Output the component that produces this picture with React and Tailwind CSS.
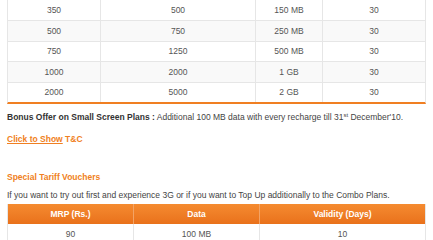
import React from 'react';

const plans = [
    ['350', '500', '150 MB', '30'],
    ['500', '750', '250 MB', '30'],
    ['750', '1250', '500 MB', '30'],
    ['1000', '2000', '1 GB', '30'],
    ['2000', '5000', '2 GB', '30'],
];

const cell = 'flex items-center justify-center border-r border-[#e6e6e6] last:border-r-0';

const App = () => {
    return (
        <div className="w-[433px] h-[240px] overflow-hidden bg-white pl-[7px] text-[8.5px] leading-[12px] text-[#555] font-['Liberation_Sans',Arial,sans-serif]">
            <div className="w-[419px] -mt-[0.5px] border-x border-[#e6e6e6] border-b-2 border-b-[#f07f22]">
                {plans.map((row, i) => (
                    <div
                        key={i}
                        className={`grid grid-cols-[93px_155px_67px_1fr] h-[20.5px] ${i > 0 ? 'border-t border-[#e6e6e6]' : ''} ${i % 2 === 1 ? 'bg-[#f9f9f9]' : 'bg-white'}`}
                    >
                        {row.map((v, j) => (
                            <div key={j} className={cell}>
                                {v}
                            </div>
                        ))}
                    </div>
                ))}
            </div>

            <p className="mt-[7px] text-[#444]">
                <b className="text-[#333]">Bonus Offer on Small Screen Plans :</b> Additional 100 MB data with every
                recharge till 31<sup className="text-[6px]">st</sup> December'10.
            </p>

            <p className="mt-[10px] font-bold text-[#f07f22]">
                <span className="underline">Click to Show</span> T&amp;C
            </p>

            <p className="mt-[26px] font-bold text-[#f07f22]">Special Tariff Vouchers</p>

            <p className="mt-[6px] text-[#444]">
                If you want to try out first and experience 3G or if you want to Top Up additionally to the Combo Plans.
            </p>

            <div className="w-[419px] mt-[3px] border-x border-[#e6e6e6]">
                <div className="grid grid-cols-[126px_126px_1fr] h-[20px] bg-gradient-to-b from-[#f58b30] to-[#e9711b] font-bold text-white">
                    <div className="flex items-center justify-center border-r border-[#f3a365]">MRP (Rs.)</div>
                    <div className="flex items-center justify-center border-r border-[#f3a365]">Data</div>
                    <div className="flex items-center justify-center">Validity (Days)</div>
                </div>
                <div className="grid grid-cols-[126px_126px_1fr] h-[20px]">
                    <div className={cell}>90</div>
                    <div className={cell}>100 MB</div>
                    <div className={cell}>10</div>
                </div>
            </div>
        </div>
    );
};

export default App;
